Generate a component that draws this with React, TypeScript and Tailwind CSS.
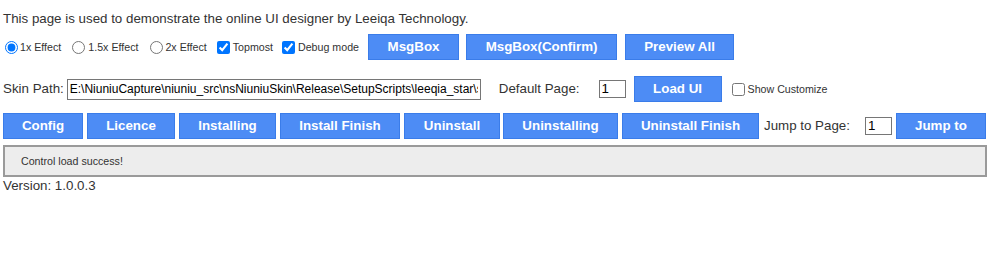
import React from "react";

const btn =
  "h-[26px] shrink-0 border border-[#3a7ce9] bg-[#4d8cf5] text-white font-bold text-[13.33px] leading-[24px] text-center";

function Btn({ w, ml, children }: { w: string; ml: string; children: React.ReactNode }) {
  return <div className={`${btn} ${w} ${ml}`}>{children}</div>;
}

export default function App() {
  return (
    <div
      className="w-[1001px] h-[254px] bg-white text-[#333] text-[13.33px]"
      style={{ fontFamily: '"Liberation Sans", Arial, sans-serif' }}
    >
      <div className="pt-[11px] pl-[3px] leading-[15px] h-[26px]">
        This page is used to demonstrate the online UI designer by Leeiqa Technology.
      </div>

      {/* Row 2 */}
      <div className="mt-[8px] flex items-center h-[26px] text-[10.67px]">
        <input type="radio" name="eff" defaultChecked className="m-0 ml-[5px] w-[13px] h-[13px]" />
        <span className="ml-[2px]">1x Effect</span>
        <input type="radio" name="eff" className="m-0 ml-[11px] w-[13px] h-[13px]" />
        <span className="ml-[3px]">1.5x Effect</span>
        <input type="radio" name="eff" className="m-0 ml-[12px] w-[13px] h-[13px]" />
        <span className="ml-[2px]">2x Effect</span>
        <input type="checkbox" defaultChecked className="m-0 ml-[10px] w-[13px] h-[13px]" />
        <span className="ml-[3px]">Topmost</span>
        <input type="checkbox" defaultChecked className="m-0 ml-[9px] w-[13px] h-[13px]" />
        <span className="ml-[3px]">Debug mode</span>
        <Btn w="w-[91px]" ml="ml-[9px]">MsgBox</Btn>
        <Btn w="w-[151px]" ml="ml-[7px]">MsgBox(Confirm)</Btn>
        <Btn w="w-[109px]" ml="ml-[8px]">Preview All</Btn>
      </div>

      {/* Row 3 */}
      <div className="mt-[16px] flex items-center h-[26px]">
        <span className="ml-[3px]">Skin Path:</span>
        <input
          type="text"
          readOnly
          defaultValue="E:\NiuniuCapture\niuniu_src\nsNiuniuSkin\Release\SetupScripts\leeqia_star\skin"
          className="ml-[3px] w-[414px] h-[21px] border border-[#767676] px-[2px] text-black text-[12px] outline-none"
        />
        <span className="ml-[18px]">Default Page:</span>
        <input
          type="text"
          readOnly
          defaultValue="1"
          className="ml-[19px] w-[27px] h-[18px] border border-[#767676] px-[2px] text-black text-[13.33px] outline-none"
        />
        <Btn w="w-[88px]" ml="ml-[8px]">Load UI</Btn>
        <input type="checkbox" className="m-0 ml-[10px] w-[13px] h-[13px]" />
        <span className="ml-[3px] text-[10.67px]">Show Customize</span>
      </div>

      {/* Row 4 */}
      <div className="mt-[11px] flex items-center h-[26px]">
        <Btn w="w-[80px]" ml="ml-[3px]">Config</Btn>
        <Btn w="w-[88px]" ml="ml-[4px]">Licence</Btn>
        <Btn w="w-[97px]" ml="ml-[4px]">Installing</Btn>
        <Btn w="w-[120px]" ml="ml-[4px]">Install Finish</Btn>
        <Btn w="w-[96px]" ml="ml-[4px]">Uninstall</Btn>
        <Btn w="w-[115px]" ml="ml-[3px]">Uninstalling</Btn>
        <Btn w="w-[137px]" ml="ml-[4px]">Uninstall Finish</Btn>
        <span className="ml-[5px]">Jump to Page:</span>
        <input
          type="text"
          readOnly
          defaultValue="1"
          className="ml-[15px] w-[27px] h-[18px] border border-[#767676] px-[2px] text-black text-[13.33px] outline-none"
        />
        <Btn w="w-[90px]" ml="ml-[4px]">Jump to</Btn>
      </div>

      {/* Message */}
      <div className="mt-[6px] ml-[3px] w-[984px] h-[32px] border-2 border-[#9a9a9a] bg-[#ededed] flex items-center pl-[16px] text-[10.67px]">
        Control load success!
      </div>
      <div className="mt-[1px] pl-[3px] leading-[15px]">Version: 1.0.0.3</div>
    </div>
  );
}
